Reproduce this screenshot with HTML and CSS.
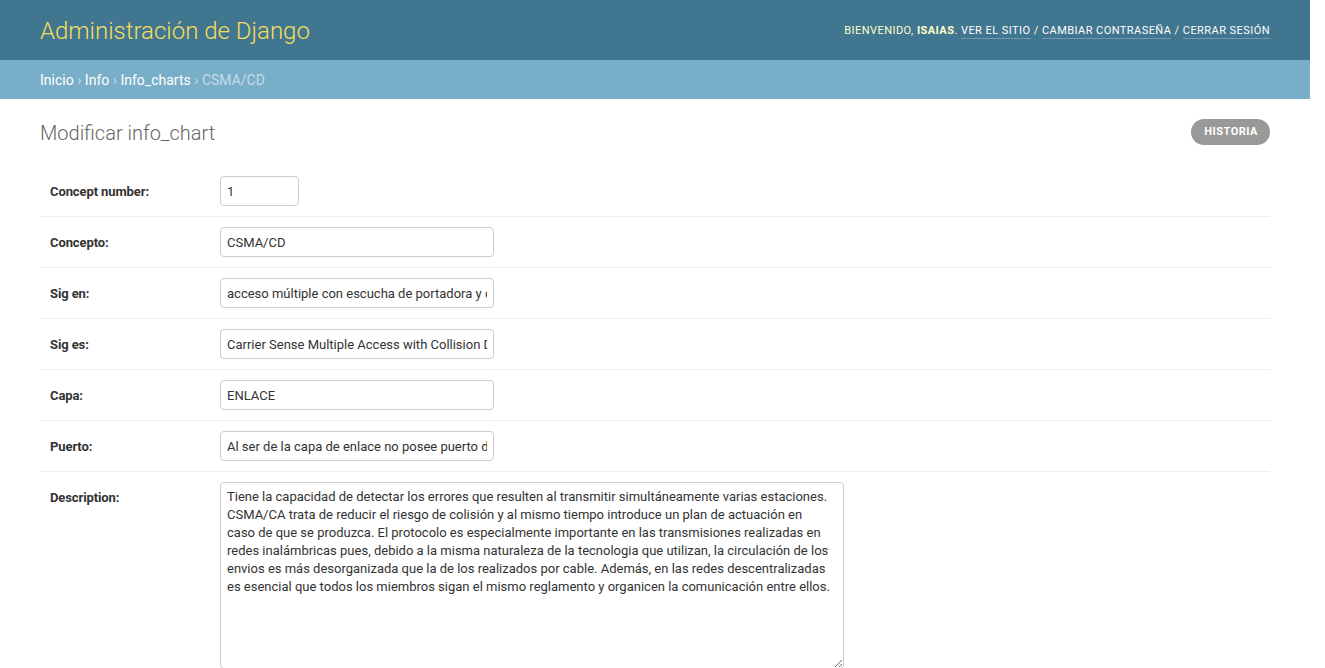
FILE: index.html
```html
<!DOCTYPE html>
<html lang="es">
<head>
<meta charset="utf-8">
<title>Modificar info_chart | Administración de Django</title>
<link rel="stylesheet" href="styles.css">
</head>
<body>
<div class="page">
  <header class="header">
    <h1 class="site-name">Administración de Django</h1>
    <div class="user-tools">
      Bienvenido, <strong>Isaias</strong>.
      <a href="#">Ver el sitio</a> /
      <a href="#">Cambiar contraseña</a> /
      <a href="#">Cerrar sesión</a>
    </div>
  </header>
  <nav class="breadcrumbs">
    <a href="#">Inicio</a> <span class="sep">›</span> <a href="#">Info</a> <span class="sep">›</span> <a href="#">Info_charts</a> <span class="sep">›</span> <span class="current">CSMA/CD</span>
  </nav>
  <main class="content">
    <div class="content-head">
      <h1 class="title">Modificar info_chart</h1>
      <a class="history" href="#">Historia</a>
    </div>
    <form class="form">
      <div class="row">
        <label class="label">Concept number:</label>
        <input class="input input-int" type="text" value="1">
      </div>
      <div class="row">
        <label class="label">Concepto:</label>
        <input class="input input-text" type="text" value="CSMA/CD">
      </div>
      <div class="row">
        <label class="label">Sig en:</label>
        <input class="input input-text" type="text" value="acceso múltiple con escucha de portadora y detección de colisiones">
      </div>
      <div class="row">
        <label class="label">Sig es:</label>
        <input class="input input-text" type="text" value="Carrier Sense Multiple Access with Collision Detection">
      </div>
      <div class="row">
        <label class="label">Capa:</label>
        <input class="input input-text" type="text" value="ENLACE">
      </div>
      <div class="row">
        <label class="label">Puerto:</label>
        <input class="input input-text" type="text" value="Al ser de la capa de enlace no posee puerto de comunicación">
      </div>
      <div class="row">
        <label class="label">Description:</label>
        <textarea class="input textarea">Tiene la capacidad de detectar los errores que resulten al transmitir simultáneamente varias estaciones.
CSMA/CA trata de reducir el riesgo de colisión y al mismo tiempo introduce un plan de actuación en
caso de que se produzca. El protocolo es especialmente importante en las transmisiones realizadas en
redes inalámbricas pues, debido a la misma naturaleza de la tecnologia que utilizan, la circulación de los
envios es más desorganizada que la de los realizados por cable. Además, en las redes descentralizadas
es esencial que todos los miembros sigan el mismo reglamento y organicen la comunicación entre ellos.</textarea>
      </div>
    </form>
  </main>
</div>
</body>
</html>
```

FILE: styles.css
```css
html, body {
  margin: 0;
  padding: 0;
  background: #fff;
}
body {
  font-family: Roboto, "Liberation Sans", sans-serif;
  font-size: 14px;
  color: #333;
  overflow: hidden;
}
.page {
  margin-right: 15px;
}
.header {
  height: 60px;
  box-sizing: border-box;
  padding: 0 40px;
  background: #417690;
  display: flex;
  align-items: center;
  justify-content: space-between;
}
.site-name {
  margin: 0;
  font-size: 24px;
  font-weight: 300;
  color: #f5dd5d;
  line-height: 1;
  padding-top: 2px;
}
.user-tools {
  font-size: 11px;
  letter-spacing: 0.45px;
  text-transform: uppercase;
  color: #ffc;
  line-height: 1;
}
.user-tools strong {
  font-weight: bold;
}
.user-tools a {
  color: #fff;
  text-decoration: none;
  border-bottom: 1px solid rgba(255, 255, 255, 0.25);
  padding-bottom: 1px;
}
.breadcrumbs {
  background: #79aec8;
  padding: 11px 40px 9px;
  height: 39px;
  box-sizing: border-box;
  font-size: 14px;
  line-height: 19px;
  color: #c4dce8;
}
.breadcrumbs a {
  color: #fff;
  text-decoration: none;
}
.breadcrumbs .sep {
  color: #c4dce8;
}
.content {
  padding: 20px 40px 0;
}
.content-head {
  display: flex;
  justify-content: space-between;
  align-items: flex-start;
  margin-bottom: 19px;
}
.title {
  margin: 0;
  font-size: 20px;
  font-weight: 300;
  color: #666;
  line-height: 28px;
}
.history {
  display: block;
  background: #999;
  color: #fff;
  font-size: 11px;
  font-weight: bold;
  letter-spacing: 0.5px;
  text-transform: uppercase;
  text-decoration: none;
  line-height: 26px;
  height: 26px;
  padding: 0 12px 0 13px;
  border-radius: 15px;
}
.form {
  margin: 0;
}
.row {
  display: flex;
  align-items: flex-start;
  padding: 10px;
  border-bottom: 1px solid #eee;
}
.label {
  width: 160px;
  padding-right: 10px;
  padding-top: 1px;
  font-size: 13px;
  font-weight: bold;
  color: #333;
  line-height: 29px;
  letter-spacing: -0.1px;
  flex: none;
}
.input {
  box-sizing: border-box;
  height: 30px;
  border: 1px solid #ccc;
  border-radius: 4px;
  padding: 5px 6px;
  font-family: Roboto, "Liberation Sans", sans-serif;
  font-size: 13px;
  line-height: 18px;
  color: #333;
  background: #fff;
  margin: 0;
  outline: none;
}
.input-int {
  width: 79px;
}
.input-text {
  width: 274px;
}
.textarea {
  width: 624px;
  height: 187px;
  resize: both;
  vertical-align: top;
  overflow: auto;
  white-space: pre-wrap;
}
```
